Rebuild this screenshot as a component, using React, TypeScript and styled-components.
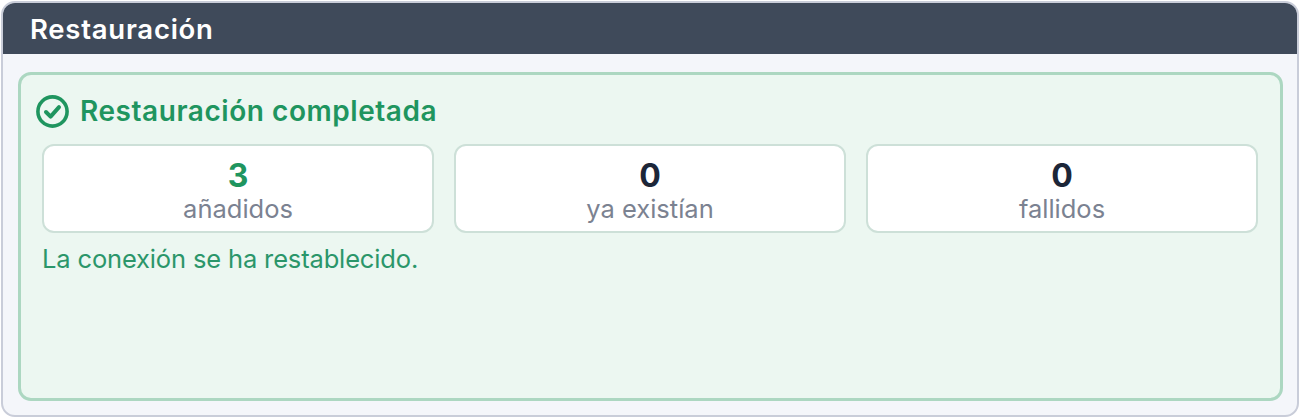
import React from "react";
import styled, { createGlobalStyle } from "styled-components";

const Global = createGlobalStyle`
  html, body { margin: 0; padding: 0; background: #ffffff; }
  body { font-family: Inter, "Noto Sans", sans-serif; }
`;

const Panel = styled.section`
  box-sizing: border-box;
  width: 1298px;
  height: 416px;
  margin: 1px;
  border: 2px solid #c9cdd9;
  border-radius: 14px;
  background: #f4f6fa;
  overflow: hidden;
  display: flex;
  flex-direction: column;
`;

const Header = styled.header`
  height: 51px;
  flex: none;
  box-sizing: border-box;
  padding: 0 27px;
  display: flex;
  align-items: center;
  background: #3f4a5a;
  color: #ffffff;
  font-size: 27.5px;
  font-weight: 600;
  letter-spacing: 0.75px;
`;

const Body = styled.div`
  flex: 1;
  display: flex;
  padding: 18px 14px 14px 15px;
  min-height: 0;
`;

const Result = styled.div`
  flex: 1;
  box-sizing: border-box;
  border: 3px solid #acd7c1;
  border-radius: 13px;
  background: #ecf7f1;
  padding: 19px 21px 0 15px;
`;

const Title = styled.h2`
  margin: 0;
  display: flex;
  align-items: center;
  gap: 11px;
  height: 34px;
  color: #1f955f;
  font-size: 28px;
  font-weight: 600;
  line-height: 34px;
  letter-spacing: 0.55px;
`;

const Stats = styled.div`
  display: grid;
  grid-template-columns: repeat(3, 392px);
  gap: 20px;
  margin: 16px 0 0 6px;
`;

const Stat = styled.div`
  box-sizing: border-box;
  height: 89px;
  border: 2px solid #cde0d8;
  border-radius: 12px;
  background: #ffffff;
  display: flex;
  flex-direction: column;
  align-items: center;
  padding-top: 12px;
`;

const Value = styled.div<{ $accent?: boolean }>`
  color: ${(p) => (p.$accent ? "#1f955f" : "#1c2638")};
  font-size: 32px;
  font-weight: 700;
  line-height: 36px;
`;

const Label = styled.div`
  color: #7b8291;
  font-size: 25.5px;
  line-height: 30px;
`;

const Message = styled.p`
  margin: 10px 0 0 6px;
  color: #2b966a;
  font-size: 25.5px;
  line-height: 32px;
  letter-spacing: -0.15px;
`;

const CheckIcon = () => (
  <svg width="33" height="33" viewBox="0 0 33 33" fill="none" stroke="#1f955f" strokeLinecap="round" strokeLinejoin="round">
    <circle cx="16.5" cy="16.5" r="14.6" strokeWidth="3.6" />
    <path d="M10 17l4.6 4.6L23 12.2" strokeWidth="4" />
  </svg>
);

export default function App() {
  return (
    <>
      <Global />
      <Panel>
        <Header>Restauración</Header>
        <Body>
          <Result>
            <Title>
              <CheckIcon />
              Restauración completada
            </Title>
            <Stats>
              <Stat>
                <Value $accent>3</Value>
                <Label>añadidos</Label>
              </Stat>
              <Stat>
                <Value>0</Value>
                <Label>ya existían</Label>
              </Stat>
              <Stat>
                <Value>0</Value>
                <Label>fallidos</Label>
              </Stat>
            </Stats>
            <Message>La conexión se ha restablecido.</Message>
          </Result>
        </Body>
      </Panel>
    </>
  );
}
